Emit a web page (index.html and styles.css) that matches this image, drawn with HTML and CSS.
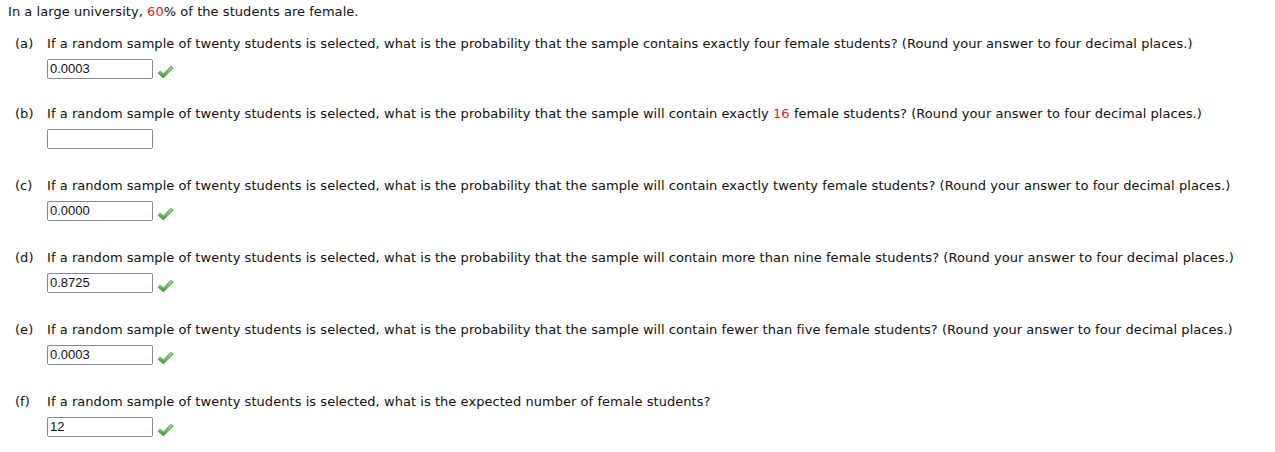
FILE: index.html
```html
<!DOCTYPE html>
<html>
<head>
<meta charset="utf-8">
<link rel="stylesheet" href="styles.css">
</head>
<body>
<svg class="defs" width="0" height="0">
  <defs>
    <linearGradient id="chk" x1="0" y1="0" x2="0" y2="1">
      <stop offset="0" stop-color="#9be08f"/>
      <stop offset="1" stop-color="#3f9b3a"/>
    </linearGradient>
    <symbol id="check" viewBox="0 0 17 14">
      <path d="M1 8.2 L3.2 6 L6.4 9 L14.2 1 L16.2 3 L6.4 13 Z" fill="url(#chk)" stroke="#4a9a45" stroke-width="0.8" stroke-linejoin="round"/>
    </symbol>
  </defs>
</svg>
<p class="intro">In a large university, <span class="red">60</span>% of the students are female.</p>
<div class="parts">
  <div class="part first">
    <span class="label">(a)</span>
    <div class="body">
      <div class="q">If a random sample of twenty students is selected, what is the probability that the sample contains exactly four female students? (Round your answer to four decimal places.)</div>
      <div class="answer"><span class="box">0.0003</span><svg class="tick"><use href="#check"/></svg></div>
    </div>
  </div>
  <div class="part">
    <span class="label">(b)</span>
    <div class="body">
      <div class="q">If a random sample of twenty students is selected, what is the probability that the sample will contain exactly <span class="red">16</span> female students? (Round your answer to four decimal places.)</div>
      <div class="answer"><span class="box"></span></div>
    </div>
  </div>
  <div class="part">
    <span class="label">(c)</span>
    <div class="body">
      <div class="q">If a random sample of twenty students is selected, what is the probability that the sample will contain exactly twenty female students? (Round your answer to four decimal places.)</div>
      <div class="answer"><span class="box">0.0000</span><svg class="tick"><use href="#check"/></svg></div>
    </div>
  </div>
  <div class="part">
    <span class="label">(d)</span>
    <div class="body">
      <div class="q">If a random sample of twenty students is selected, what is the probability that the sample will contain more than nine female students? (Round your answer to four decimal places.)</div>
      <div class="answer"><span class="box">0.8725</span><svg class="tick"><use href="#check"/></svg></div>
    </div>
  </div>
  <div class="part">
    <span class="label">(e)</span>
    <div class="body">
      <div class="q">If a random sample of twenty students is selected, what is the probability that the sample will contain fewer than five female students? (Round your answer to four decimal places.)</div>
      <div class="answer"><span class="box">0.0003</span><svg class="tick"><use href="#check"/></svg></div>
    </div>
  </div>
  <div class="part">
    <span class="label">(f)</span>
    <div class="body">
      <div class="q">If a random sample of twenty students is selected, what is the expected number of female students?</div>
      <div class="answer"><span class="box">12</span><svg class="tick"><use href="#check"/></svg></div>
    </div>
  </div>
</div>
</body>
</html>
```
FILE: styles.css
```css
html, body {
  background: #fff;
}
body {
  margin: 0;
  padding: 4px 8px;
  font-family: "DejaVu Sans", Verdana, sans-serif;
  font-size: 13px;
  line-height: 16px;
  color: #111;
  letter-spacing: 0.05px;
}
.defs {
  position: absolute;
  width: 0;
  height: 0;
}
.intro {
  margin: 0 0 16px 0;
}
.red {
  color: #e0201c;
}
.parts {
  display: flex;
  flex-direction: column;
  gap: 29px;
}
.part {
  display: flex;
  padding-left: 7px;
}
.part.first {
  margin-bottom: -2px;
}
.label {
  width: 32px;
  flex: none;
}
.body {
  display: flex;
  flex-direction: column;
  gap: 7px;
}
.answer {
  display: flex;
  align-items: flex-end;
  height: 20px;
}
.box {
  box-sizing: border-box;
  width: 106px;
  height: 20px;
  border: 1px solid #8a8a8a;
  border-radius: 2px;
  font-family: "Liberation Sans", Arial, sans-serif;
  font-size: 13px;
  line-height: 18px;
  padding-left: 2px;
  color: #111;
  letter-spacing: 0;
}
.tick {
  width: 17px;
  height: 14px;
  margin-left: 4px;
  margin-bottom: 0;
}
```
